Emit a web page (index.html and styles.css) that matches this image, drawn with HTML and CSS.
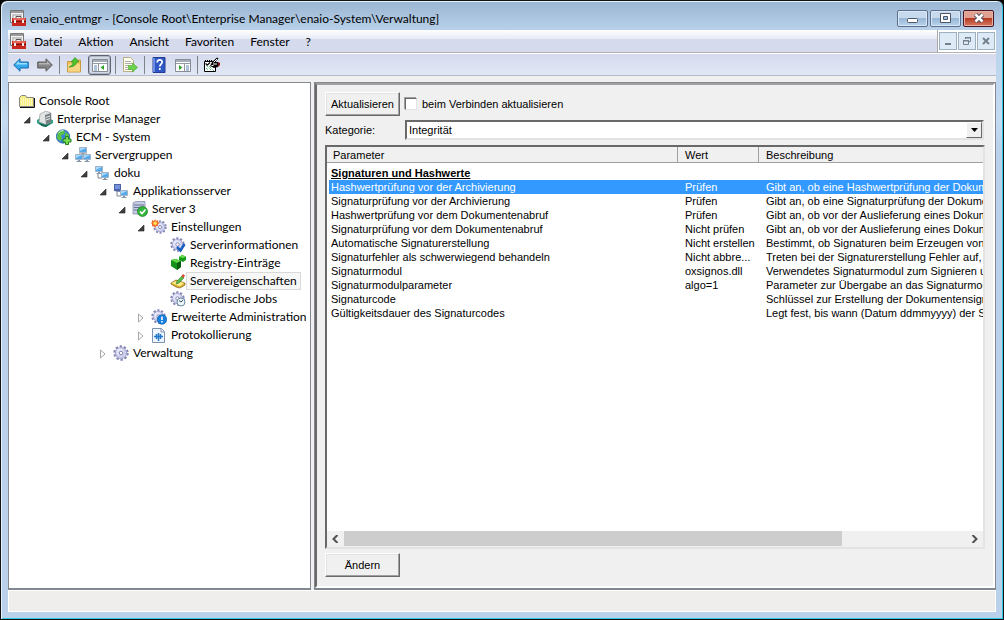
FILE: index.html
```html
<!DOCTYPE html>
<html lang="de">
<head>
    <meta charset="UTF-8">
    <title>enaio_entmgr</title>
    <link rel="stylesheet" href="styles.css">
</head>
<body>
<svg class="sprite" aria-hidden="true">
    <symbol id="mmc" viewBox="0 0 16 16">
        <path d="M.5.5h13v12H.5z" fill="#f4f4f4" stroke="#777"/>
        <path d="M1 1h12v2H1z" fill="#9a9a9a"/>
        <path d="M2 5h10M2 7h2M2 9h2" stroke="#999"/>
        <path d="M6 8V6.500h5V8" fill="none" stroke="#555"/>
        <path d="M2 8h14v8H2z" fill="#c8281e"/>
        <path d="M3 8h12v2H3z" fill="#e9695c"/>
        <path d="M2 11h14v1H2z" fill="#7d1410"/>
        <path d="M4 10h2v3H4zM12 10h2v3h-2z" fill="#eee"/>
    </symbol>
    <symbol id="gear" viewBox="0 0 16 16">
        <circle cx="8" cy="8" r="6.200" fill="none" stroke="#8486b4" stroke-width="3" stroke-dasharray="2.200 1.690"/>
        <circle cx="8" cy="8" r="5.500" fill="#cdd0ec" stroke="#a6a8d0"/>
        <circle cx="7" cy="7" r="3.500" fill="#e6e8f8"/>
        <circle cx="8" cy="8" r="1.800" fill="#fff" stroke="#8082b0"/>
    </symbol>
    <symbol id="pc" viewBox="0 0 8 8">
        <path d="M.5.5h7v5h-7z" fill="#52a9ec" stroke="#a4b4c6"/>
        <path d="M1 1h6L1 4z" fill="#a5d8ff"/>
        <path d="M3 6h2v1h1.500v1h-5V7H3z" fill="#8796a6"/>
    </symbol>
    <symbol id="open" viewBox="0 0 8 8"><path d="M7 1v6H1z" fill="#404040" stroke="#222" stroke-width=".6"/></symbol>
    <symbol id="closed" viewBox="0 0 8 10"><path d="M1.500 1v8l4.500-4z" fill="#fff" stroke="#a6a6a6"/></symbol>
</svg>

<div class="window">
    <header class="titlebar">
        <svg class="icon"><use href="#mmc"/></svg>
        <h1>enaio_entmgr - [Console Root\Enterprise Manager\enaio-System\Verwaltung]</h1>
        <div class="controls">
            <button class="control" aria-label="Minimieren"><svg width="12" height="10" viewBox="0 0 12 10"><rect x=".5" y="5.500" width="10" height="4" rx="1" fill="#fff" stroke="#4d5668"/></svg></button>
            <button class="control" aria-label="Maximieren"><svg width="12" height="10" viewBox="0 0 12 10"><path d="M.5.5h10v9H.5z" fill="#fff" stroke="#4d5668"/><path d="M3.500 3.500h4v3h-4z" fill="#9fc0e0" stroke="#4d5668"/></svg></button>
            <button class="control close" aria-label="Schließen"><svg width="12" height="10" viewBox="0 0 12 10"><path d="M2.500 1.500l7 7M9.500 1.500l-7 7" stroke="#4d4a58" stroke-width="4.500"/><path d="M2.500 1.500l7 7M9.500 1.500l-7 7" stroke="#fff" stroke-width="2.500"/></svg></button>
        </div>
    </header>

    <div class="content">
        <nav class="menubar">
            <svg class="icon"><use href="#mmc"/></svg>
            <div class="menus">
                <button>Datei</button>
                <button>Aktion</button>
                <button>Ansicht</button>
                <button>Favoriten</button>
                <button>Fenster</button>
                <button>?</button>
            </div>
            <div class="mdi">
                <button aria-label="Fenster minimieren"><svg width="10" height="10" viewBox="0 0 10 10"><path d="M2 7h6v2H2z" fill="#73828f"/></svg></button>
                <button aria-label="Fenster wiederherstellen"><svg width="10" height="10" viewBox="0 0 10 10"><path d="M3.500 3V1.500h5v4H7M1.500 4.500h5v4h-5z" fill="none" stroke="#73828f"/><path d="M3 1h6v1.500H3zM1 4h6v1.500H1z" fill="#73828f"/></svg></button>
                <button aria-label="Fenster schließen"><svg width="10" height="10" viewBox="0 0 10 10"><path d="M2 2l6 6M8 2L2 8" stroke="#73828f" stroke-width="2"/></svg></button>
            </div>
        </nav>

        <div class="toolbar">
            <button aria-label="Zurück"><svg class="icon" viewBox="0 0 16 16"><path d="M.7 8L7 1.800V5h8.300v6H7v3.200z" fill="#35a8ee" stroke="#1769ae"/><path d="M2.500 7.500L6 4v2h8v1.500z" fill="#9be0ff"/></svg></button>
            <button aria-label="Vorwärts"><svg class="icon" viewBox="0 0 16 16"><path d="M15.300 8L9 1.800V5H.7v6H9v3.200z" fill="#858585" stroke="#5d5d5d"/><path d="M13.500 7.500L10 4v2H2v1.500z" fill="#b5b5b5"/></svg></button>
            <span class="sep"></span>
            <button aria-label="Eine Ebene nach oben"><svg class="icon" viewBox="0 0 16 16"><path d="M1.500 15V4.500h6l1-1.500h6v12z" fill="#f0c45c" stroke="#c99b42"/><path d="M2 7h12v7.500H2z" fill="#f9d583"/><path d="M3 10c3-1 4-3 4-5H5l4-4.500L13 5h-2.500c0 3-3 5-7.500 5z" fill="#4cc62e" stroke="#25881a" stroke-width=".6"/></svg></button>
            <button class="pressed" aria-label="Konsolenstruktur einblenden"><svg class="icon" viewBox="0 0 16 16"><path d="M.5 2.500h15v12H.5z" fill="#fff" stroke="#858c96"/><path d="M1 3h14v2H1z" fill="#a6adb8"/><path d="M1 6.500h14M6.500 7v7" stroke="#9299a5"/><path d="M2 9h3M2 11h3M2 13h3" stroke="#5f86b8"/><path d="M12 8v5L8.500 10.500z" fill="#2fa52c"/></svg></button>
            <span class="sep"></span>
            <button aria-label="Liste exportieren"><svg class="icon" viewBox="0 0 16 16"><path d="M1.500.5h7l3 3v11h-10z" fill="#fffdee" stroke="#b9ad82"/><path d="M3 4.500h6M3 6.500h7M3 8.500h4M3 10.500h3M3 12.500h6" stroke="#9a9a9a" stroke-width=".8"/><path d="M6.500 8.500h4V6l5 4.500-5 4.500v-2.500h-4z" fill="#6bd34a" stroke="#43a32d" stroke-width=".6"/></svg></button>
            <span class="sep"></span>
            <button aria-label="Hilfe"><svg class="icon" viewBox="0 0 16 16"><path d="M2 .500h12v15H2z" fill="#3058c4" stroke="#203d91"/><path d="M2 1h2v14H2z" fill="#6a8de6"/><path d="M6.200 5.500c0-3.500 5-3.300 5-.5 0 2-2.400 2.300-2.400 4.500M8.800 11v2" fill="none" stroke="#fff" stroke-width="1.700"/></svg></button>
            <button aria-label="Aktionsbereich einblenden"><svg class="icon" viewBox="0 0 16 16"><path d="M.5 2.500h15v12H.5z" fill="#fff" stroke="#858c96"/><path d="M1 3h14v2H1z" fill="#a6adb8"/><path d="M1 6.500h14M9.500 7v7" stroke="#9299a5"/><path d="M11 9h3M11 11h3M11 13h3" stroke="#5f86b8"/><path d="M4 8v5l3.500-2.500z" fill="#2fa52c"/></svg></button>
            <span class="sep"></span>
            <button aria-label="Eigenschaften bearbeiten"><svg class="icon" viewBox="0 0 16 16"><path d="M.5 4.500h11v10H.5z" fill="#fff" stroke="#000"/><path d="M1 3.500h8" stroke="#000" stroke-dasharray="1 1"/><path d="M2 8l5 5M5 9l5 5M2 11l2 2" stroke="#27984c" stroke-dasharray="1 1"/><path d="M1.500 6.500l2 1.500L6 5.500" fill="none" stroke="#000" stroke-width="1.200"/><path d="M6 9l2-4 5-4.500 1.500 1L11 5h3v5l-4 1z" fill="#000"/><path d="M7.500 8.500h2M9.500 5.500L13 2M9 7h4" stroke="#fff"/><path d="M14 5l2 1v2l-2 2z" fill="#7c1315"/></svg></button>
        </div>

        <main class="workspace">
            <aside class="tree">
                <div class="node root"><svg class="icon" viewBox="0 0 16 16"><path d="M.5 13.500v-9l2-2h4l1 2h7v9z" fill="#f6ee80" stroke="#868686"/><path d="M2 6h12M2 8h12M2 10h12M2 12h12" stroke="#fff" stroke-dasharray="1 1"/><path d="M1 14.500h14.500V5" fill="none" stroke="#111"/></svg><span>Console Root</span></div>
                <ul class="top">
                    <li>
                        <div class="node"><svg class="toggle"><use href="#open"/></svg><svg class="icon" viewBox="0 0 16 16"><path d="M0 9l5-3 11 3v3l-7 4-4-1-5-3z" fill="#2ba184"/><path d="M1 12l8 2 6-3-6 5-4-1z" fill="#13644f"/><path d="M3 3l6-3 5 2v9l-5 2.500L2 11z" fill="#e3e5e5" stroke="#8b8f90" stroke-width=".6"/><path d="M8 4l6-2v9l-5 2.500z" fill="#777f82"/><path d="M9 6.500l4-1.500M9 9l4-1.500" stroke="#eee"/></svg><span>Enterprise Manager</span></div>
                        <ul>
                            <li>
                                <div class="node"><svg class="toggle"><use href="#open"/></svg><svg class="icon" viewBox="0 0 16 16"><circle cx="7" cy="7.500" r="6.700" fill="#3b85d9" stroke="#2360a6" stroke-width=".7"/><path d="M2 3l4-2.300 3 1.500-1 3-3 1 1 3-2 3-3-3zM10 3l3 3v3h-3l-1-3z" fill="#5cc341"/><path d="M2.500 4a6 6 0 0 1 5-2.500" stroke="#c7e9ff" fill="none"/><path d="M9.500 7.500h3v2.500h2.500v3h-2.500v2.500h-3V13H7v-3h2.500z" fill="#79dc4e" stroke="#23811c"/></svg><span>ECM - System</span></div>
                                <ul>
                                    <li>
                                        <div class="node"><svg class="toggle"><use href="#open"/></svg><svg class="icon" viewBox="0 0 16 16"><path d="M4 9V7h8v2M8 5v3" fill="none" stroke="#7c8791"/><use href="#pc" x="4" y="0" width="8" height="8"/><use href="#pc" x="0" y="7" width="8" height="8"/><use href="#pc" x="8" y="7" width="8" height="8"/></svg><span>Servergruppen</span></div>
                                        <ul>
                                            <li>
                                                <div class="node"><svg class="toggle"><use href="#open"/></svg><svg class="icon" viewBox="0 0 16 16"><path d="M4 8v5h4" fill="none" stroke="#7c8791"/><use href="#pc" x="1" y="1" width="8" height="8"/><use href="#pc" x="7" y="7" width="8" height="8"/></svg><span>doku</span></div>
                                                <ul>
                                                    <li>
                                                        <div class="node"><svg class="toggle"><use href="#open"/></svg><svg class="icon" viewBox="0 0 16 16"><path d="M4 8v5h4" fill="none" stroke="#7c8791"/><path d="M1 1h7v8l-7-1z" fill="#4d64a6"/><path d="M2 2h5v4H2z" fill="#7393dc"/><use href="#pc" x="7" y="7" width="8" height="8"/></svg><span>Applikationsserver</span></div>
                                                        <ul>
                                                            <li>
                                                                <div class="node"><svg class="toggle"><use href="#open"/></svg><svg class="icon" viewBox="0 0 16 16"><path d="M1 2l3-1.500h9V13H1z" fill="#c5cbe0" stroke="#7b82a4" stroke-width=".7"/><path d="M2 4h10M2 6.500h9M2 9h9" stroke="#6b73a0"/><circle cx="10.500" cy="10.500" r="5" fill="#32b53b" stroke="#177b20" stroke-width=".7"/><path d="M8 10.500l2 2 3.500-4" fill="none" stroke="#fff" stroke-width="1.700"/></svg><span>Server 3</span></div>
                                                                <ul>
                                                                    <li>
                                                                        <div class="node"><svg class="toggle"><use href="#open"/></svg><svg class="icon" viewBox="0 0 16 16"><use href="#gear" x="2" y="1" width="14" height="14"/><path d="M4 0l1 2 2-1v2l2 1-2 1v2L5 7 4 9 3 7 1 7.500V5L0 4l1-1V1l2 1z" fill="#f36d2c"/><circle cx="4.200" cy="4.200" r="1.700" fill="#ffe55c"/></svg><span>Einstellungen</span></div>
                                                                        <ul>
                                                                            <li><div class="node"><span class="toggle"></span><svg class="icon" viewBox="0 0 16 16"><use href="#gear" x="0" y="0" width="15" height="15"/><path d="M7 10l3.500 3.500L14.500 7" fill="none" stroke="#195fbd" stroke-width="2.500"/></svg><span>Serverinformationen</span></div></li>
                                                                            <li><div class="node"><span class="toggle"></span><svg class="icon" viewBox="0 0 16 16"><path d="M1 5l5-1 5 2v6l-4 3-6-4z" fill="#15911a"/><path d="M1 5l5-1 5 2-4 2z" fill="#63d64c"/><path d="M7 8l4-2v6l-4 3z" fill="#075b0c"/><path d="M9 2l3-2 4 1.500V5l-3 2-4-2z" fill="#169a1b"/><path d="M9 2l3-2 4 1.500L13 3z" fill="#6bdc52"/></svg><span>Registry-Einträge</span></div></li>
                                                                            <li><div class="node"><span class="toggle"></span><svg class="icon" viewBox="0 0 16 16"><path d="M1 10l5-3 9 3v2l-5 3-4-1-5-3z" fill="#d9a928" stroke="#83641c" stroke-width=".7"/><path d="M1.500 10l4.500-2 8 2-4 3.500z" fill="#ffed88"/><path d="M6 11l1-3 5-5 2 2-5 5z" fill="#54b946" stroke="#29732a" stroke-width=".5"/><path d="M11.500 3L13 1l2 1.500L13.500 5z" fill="#e34531"/></svg><span class="selected">Servereigenschaften</span></div></li>
                                                                            <li><div class="node"><span class="toggle"></span><svg class="icon" viewBox="0 0 16 16"><use href="#gear" x="0" y="0" width="15" height="15"/><circle cx="11" cy="11" r="4" fill="#edf7fb" stroke="#68899d"/><path d="M9 9.500l2 1.500 2-2" fill="none" stroke="#33495a"/></svg><span>Periodische Jobs</span></div></li>
                                                                        </ul>
                                                                    </li>
                                                                    <li><div class="node"><svg class="toggle"><use href="#closed"/></svg><svg class="icon" viewBox="0 0 16 16"><use href="#gear" x="0" y="0" width="15" height="15"/><circle cx="11" cy="10.500" r="4.800" fill="#1680dc" stroke="#0b57a4" stroke-width=".6"/><path d="M11 7.500v3.500M11 12v1.500" stroke="#fff" stroke-width="1.600"/></svg><span>Erweiterte Administration</span></div></li>
                                                                    <li><div class="node"><svg class="toggle"><use href="#closed"/></svg><svg class="icon" viewBox="0 0 16 16"><path d="M1.500 1.500h9l3 3v11h-12z" fill="#eef6ff" stroke="#7e91ad"/><path d="M10 2v3h3" fill="none" stroke="#7e91ad"/><path d="M3 9.500h9M5.500 7v5M7.500 6v8M9.500 7v5" fill="none" stroke="#2477c6" stroke-width="1.500"/></svg><span>Protokollierung</span></div></li>
                                                                </ul>
                                                            </li>
                                                        </ul>
                                                    </li>
                                                    <li><div class="node"><svg class="toggle"><use href="#closed"/></svg><svg class="icon" viewBox="0 0 16 16"><use href="#gear" x="0" y="0" width="16" height="16"/></svg><span>Verwaltung</span></div></li>
                                                </ul>
                                            </li>
                                        </ul>
                                    </li>
                                </ul>
                            </li>
                        </ul>
                    </li>
                </ul>
            </aside>

            <section class="details">
                <div class="pane">
                    <div class="line">
                        <button class="btn">Aktualisieren</button>
                        <input type="checkbox" id="auto" class="check">
                        <label for="auto">beim Verbinden aktualisieren</label>
                    </div>
                    <div class="line category">
                        <label for="kategorie">Kategorie:</label>
                        <div class="combo">
                            <select id="kategorie">
                                <option>Integrität</option>
                            </select>
                            <span class="drop"><svg width="7" height="4" viewBox="0 0 7 4"><path d="M0 0h7L3.500 4z"/></svg></span>
                        </div>
                    </div>
                    <div class="list">
                        <div class="rows">
                            <table>
                                <colgroup><col class="c1"><col class="c2"><col></colgroup>
                                <thead>
                                    <tr><th>Parameter</th><th>Wert</th><th>Beschreibung</th></tr>
                                </thead>
                                <tbody>
                                    <tr class="group"><td colspan="3">Signaturen und Hashwerte</td></tr>
                                    <tr class="active"><td>Hashwertprüfung vor der Archivierung</td><td>Prüfen</td><td>Gibt an, ob eine Hashwertprüfung der Dokume</td></tr>
                                    <tr><td>Signaturprüfung vor der Archivierung</td><td>Prüfen</td><td>Gibt an, ob eine Signaturprüfung der Dokumen</td></tr>
                                    <tr><td>Hashwertprüfung vor dem Dokumentenabruf</td><td>Prüfen</td><td>Gibt an, ob vor der Auslieferung eines Dokume</td></tr>
                                    <tr><td>Signaturprüfung vor dem Dokumentenabruf</td><td>Nicht prüfen</td><td>Gibt an, ob vor der Auslieferung eines Dokume</td></tr>
                                    <tr><td>Automatische Signaturerstellung</td><td>Nicht erstellen</td><td>Bestimmt, ob Signaturen beim Erzeugen von D</td></tr>
                                    <tr><td>Signaturfehler als schwerwiegend behandeln</td><td>Nicht abbre...</td><td>Treten bei der Signaturerstellung Fehler auf, so</td></tr>
                                    <tr><td>Signaturmodul</td><td>oxsignos.dll</td><td>Verwendetes Signaturmodul zum Signieren un</td></tr>
                                    <tr><td>Signaturmodulparameter</td><td>algo=1</td><td>Parameter zur Übergabe an das Signaturmodu</td></tr>
                                    <tr><td>Signaturcode</td><td></td><td>Schlüssel zur Erstellung der Dokumentensigna</td></tr>
                                    <tr><td>Gültigkeitsdauer des Signaturcodes</td><td></td><td>Legt fest, bis wann (Datum ddmmyyyy) der Sig</td></tr>
                                </tbody>
                            </table>
                        </div>
                        <div class="scrollbar">
                            <button aria-label="Nach links"><svg width="7" height="8" viewBox="0 0 7 8"><path d="M5.500 0L1.500 4l4 4" fill="none" stroke="#505050" stroke-width="2"/></svg></button>
                            <div class="track"><div class="thumb"></div></div>
                            <button aria-label="Nach rechts"><svg width="7" height="8" viewBox="0 0 7 8"><path d="M1.500 0l4 4-4 4" fill="none" stroke="#505050" stroke-width="2"/></svg></button>
                        </div>
                    </div>
                    <div class="line">
                        <button class="btn">Ändern</button>
                    </div>
                </div>
            </section>
        </main>

        <footer class="statusbar"></footer>
    </div>
</div>
</body>
</html>
```
FILE: styles.css
```css
* {
    box-sizing: border-box;
}

body {
    margin: 0;
    background: #000;
    color: #000;
    font-family: Lato, "Open Sans", sans-serif;
    font-size: 12px;
}

button, select {
    font: inherit;
    color: inherit;
    padding: 0;
    margin: 0;
    border: 0;
    background: none;
}

.sprite {
    display: none;
}

.icon {
    width: 16px;
    height: 16px;
    flex: none;
    display: block;
}

/* Fensterrahmen */
.window {
    height: 100vh;
    display: flex;
    flex-direction: column;
    padding: 0 7px 7px 6px;
    border: 1px solid #111;
    border-radius: 7px 7px 0 0;
    background: linear-gradient(#9ab5d2, #b9d1ea 30px, #c3dcf2 120px, #b9d1ea 150px);
    box-shadow: inset 1px 1px #e6f2fb, inset -1px -1px #2cc8e6;
}

.titlebar {
    height: 29px;
    flex: none;
    display: flex;
    align-items: center;
    gap: 4px;
    padding: 5px 2px 0 3px;
}

.titlebar h1 {
    flex: 1;
    margin: 0;
    font-size: 12px;
    font-weight: normal;
    white-space: nowrap;
}

.controls {
    display: flex;
    gap: 2px;
}

.control {
    width: 31px;
    height: 17px;
    display: flex;
    align-items: center;
    justify-content: center;
    border: 1px solid #5c6f8c;
    border-radius: 2px;
    background: linear-gradient(#c6d9ed 50%, #98b7d6 50%, #b9d3ec);
    box-shadow: inset 0 0 0 1px #d9e8f6;
}

.close {
    border-color: #4b1421;
    background: linear-gradient(#e0a193 50%, #b83a22 50%, #d47b62);
    box-shadow: inset 0 0 0 1px #e6b0a3;
}

.content {
    flex: 1;
    min-height: 0;
    display: flex;
    flex-direction: column;
    margin-left: 1px;
    background: #f0f0f0;
}

/* Menü */
.menubar {
    height: 23px;
    flex: none;
    display: flex;
    align-items: center;
    padding-left: 2px;
    border-bottom: 1px solid #b0b0b0;
    background: linear-gradient(#fff, #e6eaf5 9px, #d5daed 9px);
}

.menus {
    flex: 1;
    display: flex;
    gap: 16px;
    padding-left: 8px;
}

.mdi {
    align-self: stretch;
    display: flex;
    gap: 1px;
    padding: 2px 1px;
    border-left: 1px solid #a9a9a9;
    background: #fff;
}

.mdi button {
    width: 18px;
    height: 18px;
    display: flex;
    align-items: center;
    justify-content: center;
    border: 1px solid #9db1c1;
    background: #dfeaf7;
}

/* Symbolleiste */
.toolbar {
    height: 23px;
    flex: none;
    display: flex;
    align-items: center;
    gap: 4px;
    padding-left: 3px;
    border-top: 1px solid #fff;
    border-bottom: 1px solid #b6bacd;
    background: linear-gradient(#d5daed, #e2e7f6);
}

.toolbar button {
    width: 20px;
    height: 20px;
    display: flex;
    align-items: center;
    justify-content: center;
}

.toolbar .pressed {
    width: 23px;
    border: 1px solid #5f6470;
    border-radius: 3px;
    background: #d3d9e6;
    box-shadow: inset 0 0 0 1px #b2b8c6;
}

.sep {
    width: 1px;
    height: 18px;
    background: #7d8188;
}

.workspace {
    flex: 1;
    min-height: 0;
    display: flex;
    gap: 3px;
    padding-top: 6px;
}

/* Baum */
.tree {
    width: 303px;
    flex: none;
    padding: 9px 0 0;
    border: 1px solid #828790;
    border-bottom-width: 2px;
    background: #fff;
}

.tree ul {
    margin: 0;
    padding: 0 0 0 19px;
    list-style: none;
}

.tree .top {
    padding-left: 14px;
}

.node {
    height: 18px;
    display: flex;
    align-items: center;
    white-space: nowrap;
}

.root {
    padding-left: 10px;
}

.node span:last-child {
    padding: 0 3px;
    border: 1px solid transparent;
    line-height: 16px;
}

.node .selected:last-child {
    border-color: #d9d9d9;
    background: #f7f7f7;
}

.toggle {
    width: 8px;
    height: 10px;
    flex: none;
    margin: 2px 6px 0 0;
}

/* Detailbereich */
.details {
    flex: 1;
    min-width: 0;
    display: flex;
    border: 1px solid #828790;
    border-bottom-width: 2px;
}

.pane {
    flex: 1;
    min-width: 0;
    display: flex;
    flex-direction: column;
    padding: 7px 8px 9px;
    border: 2px solid;
    border-color: #a0a0a0 #fff #fff #696969;
    font-family: "Liberation Sans", Arial, sans-serif;
    font-size: 11px;
}

.line {
    display: flex;
    align-items: center;
}

.btn {
    width: 75px;
    height: 24px;
    border: 1px solid;
    border-color: #fff #696969 #696969 #fff;
    background: #f0f0f0;
    box-shadow: inset -1px -1px #a0a0a0, inset 1px 1px #e3e3e3;
}

.check {
    appearance: none;
    width: 12px;
    height: 12px;
    margin: 0 5px;
    border: 1px solid;
    border-color: #696969 #e3e3e3 #e3e3e3 #696969;
    background: #fff;
    box-shadow: -1px -1px #a0a0a0;
}

.category {
    margin: 4px 0 5px;
}

.category label {
    width: 80px;
}

.combo {
    flex: 1;
    height: 20px;
    display: flex;
    margin-right: 1px;
    border: 2px solid;
    border-color: #696969 #e3e3e3 #e3e3e3 #696969;
    background: #fff;
}

.combo select {
    flex: 1;
    appearance: none;
    padding-left: 2px;
}

.drop {
    width: 16px;
    display: flex;
    align-items: center;
    justify-content: center;
    border: 1px solid;
    border-color: #fff #696969 #696969 #fff;
    background: #f0f0f0;
}

.list {
    flex: 1;
    min-height: 0;
    display: flex;
    flex-direction: column;
    margin-bottom: 4px;
    border: 2px solid;
    border-color: #696969 #e3e3e3 #e3e3e3 #696969;
    background: #fff;
}

.rows {
    flex: 1;
    min-height: 0;
    overflow: hidden;
}

table {
    width: 100%;
    table-layout: fixed;
    border-collapse: separate;
    border-spacing: 0;
}

.c1 {
    width: 351px;
}

.c2 {
    width: 81px;
}

th, td {
    height: 14px;
    padding: 0 0 0 7px;
    overflow: hidden;
    white-space: nowrap;
    text-align: left;
    font-weight: normal;
    line-height: 14px;
}

th {
    height: 16px;
    border-right: 1px solid #a0a0a0;
    border-bottom: 1px solid #a0a0a0;
    background: #f0f0f0;
}

th:first-child {
    padding-left: 6px;
}

th:last-child {
    border-right: 0;
}

td:first-child {
    padding-left: 4px;
}

.group td {
    height: 17px;
    padding-top: 3px;
    font-weight: bold;
    text-decoration: underline;
}

.active {
    background: linear-gradient(#3399ff, #3399ff) 2px 0 no-repeat;
    color: #fff;
}

.scrollbar {
    height: 16px;
    flex: none;
    display: flex;
    background: #f0f0f0;
}

.scrollbar button {
    width: 17px;
    display: flex;
    align-items: center;
    justify-content: center;
}

.track {
    flex: 1;
}

.thumb {
    width: 80%;
    height: 15px;
    background: #cdcdcd;
}

.statusbar {
    height: 22px;
    flex: none;
    border: 1px solid #fff;
    background: #f0eded;
}
```
